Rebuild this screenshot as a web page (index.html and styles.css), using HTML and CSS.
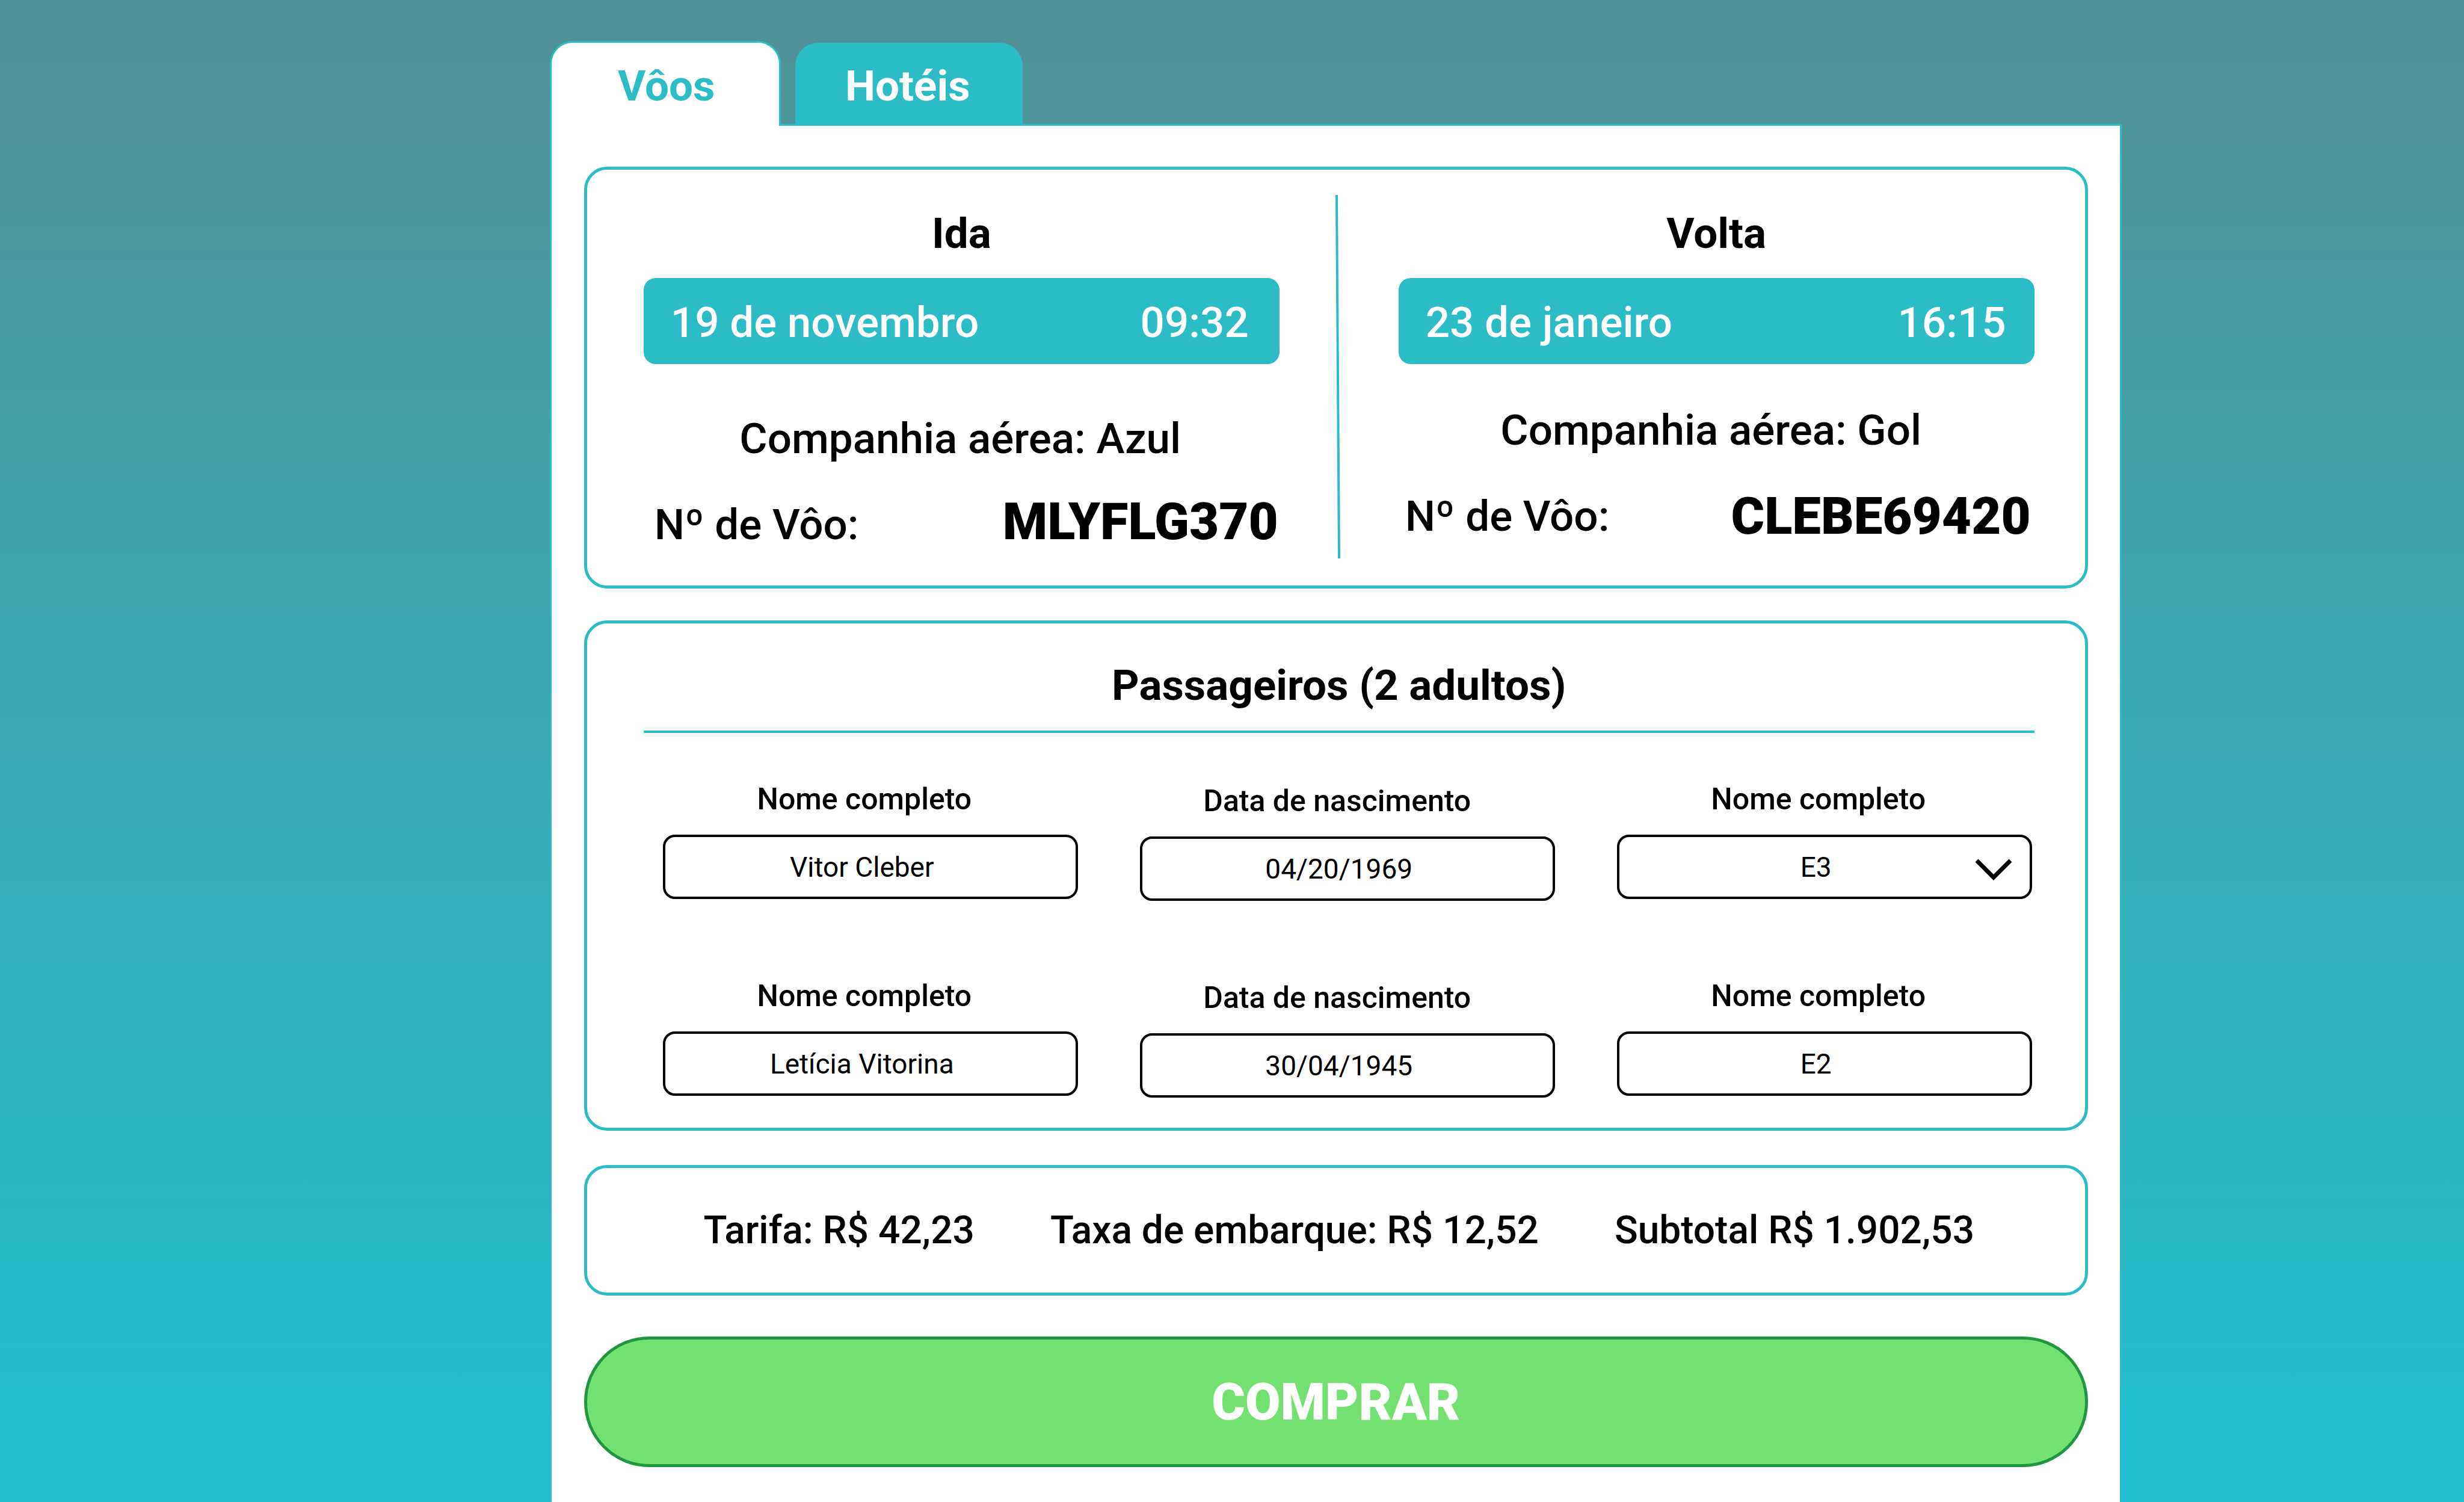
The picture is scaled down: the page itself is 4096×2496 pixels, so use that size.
FILE: index.html
```html
<!DOCTYPE html>
<html lang="pt-BR">
<head>
  <meta charset="utf-8">
  <meta name="viewport" content="width=device-width, initial-scale=1">
  <title>Compra de passagens</title>
  <link rel="stylesheet" href="styles.css">
</head>
<body>
  <main class="page">
    <nav class="tabs">
      <a class="tab tab--active" href="#voos">Vôos</a>
      <a class="tab" href="#hoteis">Hotéis</a>
    </nav>

    <form class="panel" id="voos">
      <section class="card trips">
        <div class="leg">
          <h2 class="title">Ida</h2>
          <div class="when"><span>19 de novembro</span><span>09:32</span></div>
          <p class="airline">Companhia aérea: Azul</p>
          <div class="flight"><span>Nº de Vôo:</span><strong class="code">MLYFLG370</strong></div>
        </div>
        <svg class="divider" viewBox="0 0 8 604" preserveAspectRatio="none" aria-hidden="true">
          <path d="M2 0L6 604" fill="none" stroke="#2cbcc6" stroke-width="4"/>
        </svg>
        <div class="leg leg--return">
          <h2 class="title">Volta</h2>
          <div class="when"><span>23 de janeiro</span><span>16:15</span></div>
          <p class="airline">Companhia aérea: Gol</p>
          <div class="flight"><span>Nº de Vôo:</span><strong class="code">CLEBE69420</strong></div>
        </div>
      </section>

      <section class="card passengers">
        <h2 class="title passengers__title">Passageiros (2 adultos)</h2>
        <div class="fields">
          <div class="field">
            <label class="label" for="nome1">Nome completo</label>
            <input class="control" id="nome1" type="text" value="Vitor Cleber">
          </div>
          <div class="field field--date">
            <label class="label" for="data1">Data de nascimento</label>
            <input class="control" id="data1" type="text" value="04/20/1969">
          </div>
          <div class="field">
            <label class="label" for="lugar1">Nome completo</label>
            <div class="picker">
              <select class="control" id="lugar1"><option>E3</option></select>
              <svg class="chevron" viewBox="0 0 62 36" aria-hidden="true">
                <path d="M3 3L31 31L59 3" fill="none" stroke="#000" stroke-width="7"/>
              </svg>
            </div>
          </div>
          <div class="field">
            <label class="label" for="nome2">Nome completo</label>
            <input class="control" id="nome2" type="text" value="Letícia Vitorina">
          </div>
          <div class="field field--date">
            <label class="label" for="data2">Data de nascimento</label>
            <input class="control" id="data2" type="text" value="30/04/1945">
          </div>
          <div class="field">
            <label class="label" for="lugar2">Nome completo</label>
            <input class="control" id="lugar2" type="text" value="E2">
          </div>
        </div>
      </section>

      <section class="card totals">
        <span>Tarifa: R$ 42,23</span>
        <span>Taxa de embarque: R$ 12,52</span>
        <span>Subtotal R$ 1.902,53</span>
      </section>

      <button class="buy" type="button">COMPRAR</button>
    </form>
  </main>
</body>
</html>
```
FILE: styles.css
```css
:root {
  --teal: #2cbcc6;
}

* {
  box-sizing: border-box;
}

body {
  margin: 0;
  min-height: 100vh;
  background: linear-gradient(#509195, #20c0ce);
  color: #000;
  font-family: Roboto, "Liberation Sans", sans-serif;
  font-size: 71px;
  font-weight: 500;
  line-height: 84px;
}

h2,
p {
  margin: 0;
}

.page {
  display: flex;
  flex-direction: column;
  min-height: 100vh;
  padding: 68px 13.9% 0 22.31%;
}

/* Tabs */
.tabs {
  display: flex;
  align-items: flex-end;
  gap: 24px;
}

.tab {
  width: 378px;
  height: 135px;
  padding: 30px 4px 0 0;
  border-radius: 38px 38px 0 0;
  background: var(--teal);
  color: #fff;
  font-weight: 700;
  text-align: center;
  text-decoration: none;
}

.tab--active {
  z-index: 1;
  width: 384px;
  height: 141px;
  margin-bottom: -3px;
  padding: 30px 0 0 4px;
  border: 3px solid var(--teal);
  border-bottom: 0;
  background: #fff;
  color: var(--teal);
}

/* Panel */
.panel {
  display: flex;
  flex: 1;
  flex-direction: column;
  padding: 68px 53px 61px 54px;
  border: 3px solid var(--teal);
  border-bottom: 0;
  background: #fff;
}

.card {
  border: 5px solid var(--teal);
  border-radius: 38px;
}

.title {
  font-size: 71px;
  font-weight: 700;
  line-height: 84px;
  text-align: center;
}

/* Trips */
.trips {
  display: flex;
  padding: 42px 84px 45px 94px;
}

.leg {
  display: flex;
  flex: 1;
  flex-direction: column;
  padding-top: 22px;
}

.divider {
  flex: none;
  width: 8px;
  height: 604px;
  margin: 0 97px 0 93px;
}

.when {
  display: flex;
  align-items: center;
  justify-content: space-between;
  height: 143px;
  margin-top: 32px;
  padding: 4px 51px 0 45px;
  border-radius: 20px;
  background: var(--teal);
  color: #fff;
}

.airline {
  margin-top: 82px;
  padding-right: 4px;
  text-align: center;
}

.flight {
  display: flex;
  align-items: baseline;
  justify-content: space-between;
  margin-top: 46px;
  padding: 0 2px 0 18px;
}

.leg--return .when {
  padding-right: 47px;
}

.leg--return .airline {
  margin-top: 68px;
  padding-right: 18px;
}

.leg--return .flight {
  align-items: center;
  margin-top: 51px;
  padding: 0 6px 0 11px;
}

.code {
  font-size: 85px;
  font-weight: 900;
  line-height: 100px;
}

/* Passengers */
.passengers {
  margin-top: 53px;
  padding: 61px 84px 53px 94px;
}

.passengers__title {
  padding-bottom: 33px;
  border-bottom: 4px solid var(--teal);
}

.fields {
  display: grid;
  grid-template-columns: repeat(3, 1fr);
  gap: 131px 103px;
  padding: 80px 4px 0 32px;
}

.field {
  display: flex;
  flex-direction: column;
  gap: 29px;
}

.field--date {
  position: relative;
  top: 3px;
}

.label {
  padding-right: 20px;
  font-size: 50px;
  line-height: 60px;
  text-align: center;
}

.field--date .label {
  padding-right: 34px;
}

.picker {
  display: grid;
  position: relative;
}

.control {
  width: 100%;
  height: 107px;
  padding: 0 28px 0 0;
  border: 4px solid #000;
  border-radius: 20px;
  background: #fff;
  color: #000;
  font: 400 46px/56px Roboto, "Liberation Sans", sans-serif;
  text-align: center;
  text-align-last: center;
  appearance: none;
}

.chevron {
  position: absolute;
  top: 40px;
  right: 33px;
  width: 62px;
  height: 36px;
  pointer-events: none;
}

/* Totals */
.totals {
  display: flex;
  align-items: center;
  justify-content: center;
  gap: 126px;
  height: 217px;
  margin-top: 57px;
  padding-left: 10px;
  font-size: 64px;
}

.buy {
  height: 217px;
  margin-top: 68px;
  border: 5px solid #219640;
  border-radius: 108px;
  background: #73e170;
  color: #fff;
  font: 900 85px/100px Roboto, "Liberation Sans", sans-serif;
}
```
